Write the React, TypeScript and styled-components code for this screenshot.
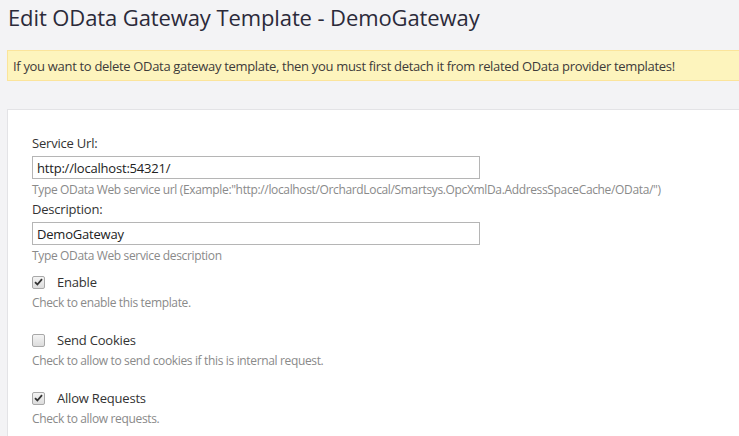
import * as React from 'react'
import styled, { createGlobalStyle } from 'styled-components'

const GlobalStyle = createGlobalStyle`
  html, body {
    margin: 0;
    padding: 0;
    background: #f3f3f5;
    overflow: hidden;
  }
  body {
    font-family: "Segoe UI", "Open Sans", "Noto Sans", sans-serif;
    color: #333;
  }
`

const Page = styled.div`
  width: 760px;
  height: 100vh;
  padding-left: 7px;
  display: flex;
  flex-direction: column;
  overflow: hidden;
`

const Title = styled.h1`
  margin: 0;
  padding: 0 0 0 1px;
  font-size: 22px;
  font-weight: 400;
  line-height: 34px;
  color: #2b2a3a;
  letter-spacing: -0.1px;
`

const Warning = styled.div`
  margin-top: 16px;
  height: 29px;
  display: flex;
  align-items: center;
  padding-left: 5px;
  background: #fdf4bd;
  border: 1px solid #fbe49b;
  font-size: 13px;
  color: #3d3b3a;
  letter-spacing: -0.32px;
`

const Panel = styled.div`
  flex: 1;
  margin-top: 28px;
  background: #fff;
  border-top: 1px solid #e3e3e6;
  border-left: 1px solid #e3e3e6;
  padding: 23px 0 0 24px;
`

const Label = styled.div`
  font-size: 13px;
  line-height: 20px;
  color: #333;
  letter-spacing: -0.2px;
`

const TextInput = styled.input`
  display: block;
  box-sizing: border-box;
  margin: 3px 0 0;
  width: 448px;
  height: 23px;
  padding: 0 4px;
  border: 1px solid #b5b5b5;
  border-radius: 0;
  font-family: inherit;
  font-size: 13px;
  color: #222;
  letter-spacing: -0.2px;
  outline: none;
`

const Hint = styled.div`
  font-size: 12px;
  line-height: 18px;
  color: #8a8a8a;
  margin-top: 2px;
  letter-spacing: -0.35px;
  white-space: nowrap;
`

const CheckRow = styled.label`
  display: flex;
  align-items: center;
  height: 20px;
  font-size: 13px;
  color: #333;
  letter-spacing: -0.2px;
`

const Box = styled.span`
  box-sizing: border-box;
  width: 13px;
  height: 13px;
  margin-right: 12px;
  border: 1px solid #a8a8a8;
  border-radius: 2px;
  background: linear-gradient(#f4f4f4, #dcdcdc);
  display: flex;
  align-items: center;
  justify-content: center;
`

const Check = ({ checked, label }: { checked?: boolean; label: string }) => (
  <CheckRow>
    <Box>
      {checked && (
        <svg width="9" height="8" viewBox="0 0 9 8">
          <path d="M1 4.2 L3.4 6.5 L8 1.2" fill="none" stroke="#333" strokeWidth="1.8" />
        </svg>
      )}
    </Box>
    {label}
  </CheckRow>
)

const CheckGroup = styled.div<{ gap?: number }>`
  margin-top: ${p => p.gap ?? 0}px;
`

export default function App() {
  return (
    <>
      <GlobalStyle />
      <Page>
        <Title>Edit OData Gateway Template - DemoGateway</Title>
        <Warning>
          If you want to delete OData gateway template, then you must first detach it from related OData provider templates!
        </Warning>
        <Panel>
          <Label>Service Url:</Label>
          <TextInput defaultValue="http://localhost:54321/" />
          <Hint>
            Type OData Web service url (Example:"http://localhost/OrchardLocal/Smartsys.OpcXmlDa.AddressSpaceCache/OData/")
          </Hint>
          <Label>Description:</Label>
          <TextInput defaultValue="DemoGateway" />
          <Hint>Type OData Web service description</Hint>
          <CheckGroup gap={7}>
            <Check checked label="Enable" />
            <Hint>Check to enable this template.</Hint>
          </CheckGroup>
          <CheckGroup gap={18}>
            <Check label="Send Cookies" />
            <Hint>Check to allow to send cookies if this is internal request.</Hint>
          </CheckGroup>
          <CheckGroup gap={18}>
            <Check checked label="Allow Requests" />
            <Hint>Check to allow requests.</Hint>
          </CheckGroup>
        </Panel>
      </Page>
    </>
  )
}
